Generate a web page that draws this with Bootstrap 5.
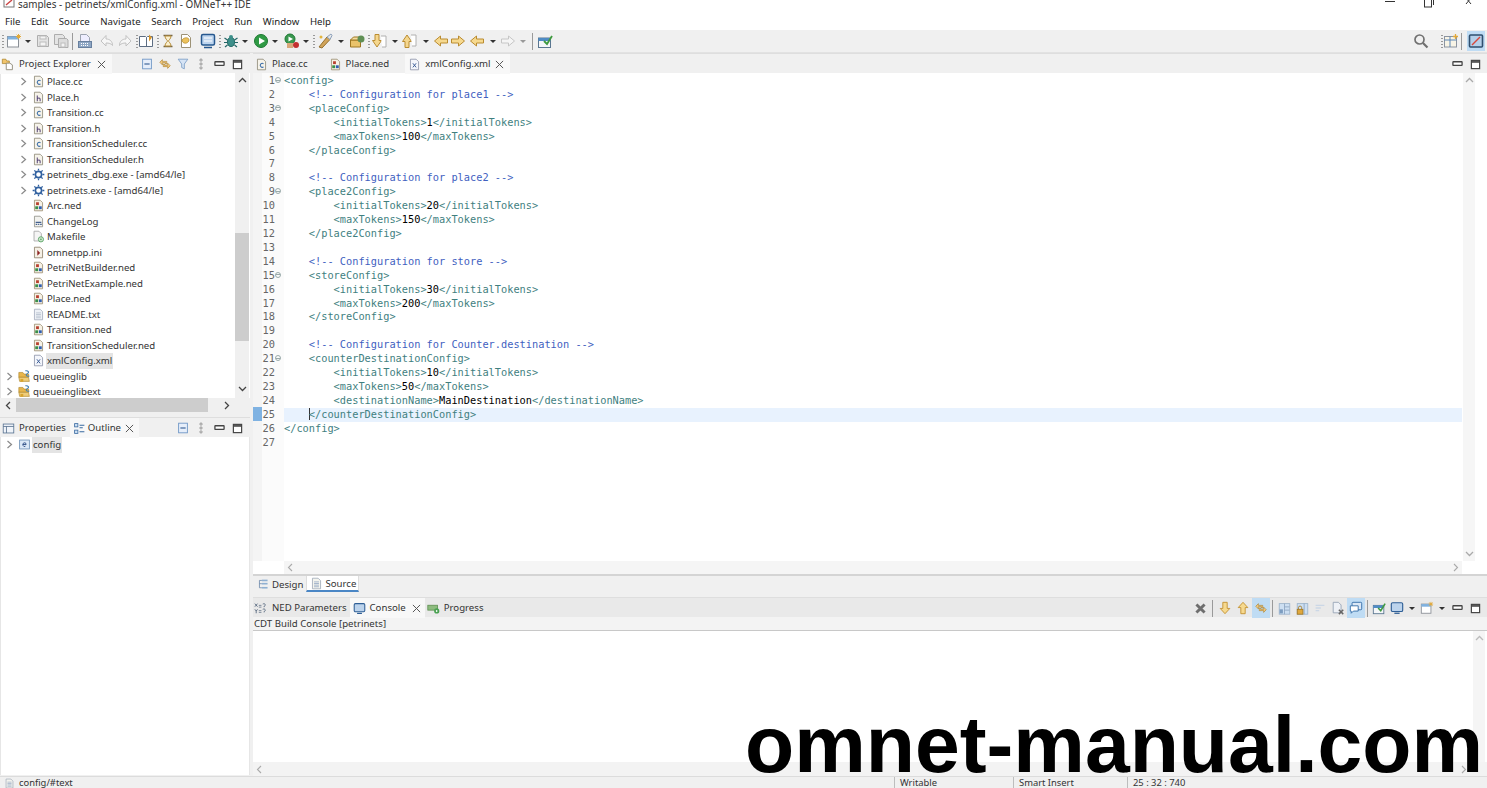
<!DOCTYPE html>
<html lang="en">
<head>
<meta charset="utf-8">
<title>samples - petrinets/xmlConfig.xml - OMNeT++ IDE</title>
<link rel="stylesheet" href="https://cdn.jsdelivr.net/npm/bootstrap@5.3.0/dist/css/bootstrap.min.css">
<style>
html,body{height:788px;overflow:hidden;background:#f0f0f0}
body{font-family:"Noto Sans","Liberation Sans",sans-serif;font-size:9.65px;color:#2b2b2b;width:1487px;position:relative}
svg{display:block;flex:none}
.ide-title{height:11px;line-height:9px;font-size:9.9px;background:#fff;padding-left:3px;color:#333}
.ide-title .ttxt{margin-left:3px}
.ide-winbtn{width:39px;display:flex;justify-content:center}
.ide-menu{height:19px;background:#fff;padding-left:5px;padding-top:1px;gap:10.6px;font-size:9.65px;color:#222;line-height:19px}
.ide-tools{height:23px;background:#f0f0f0;border-bottom:1px solid #e2e2e2;padding-left:5px}
.ti{width:18px;height:20px;display:flex;align-items:center;justify-content:center}
.tc{width:10px;height:20px;display:flex;align-items:center;justify-content:center}
.tc::after{content:"";border:3px solid transparent;border-top:3px solid #333;border-bottom:0}
.tc.off::after{border-top-color:#999}
.tsep{width:1px;height:17px;background:#9a9a9a}
.grip{width:2px;height:14px;background-image:radial-gradient(circle,#999 .8px,transparent 1px);background-size:2px 3px;margin-left:2px;margin-right:-4px}
.grip.first{margin-left:-3px;margin-right:1px}
.m1{margin-left:1px}.m2{margin-left:2px}.m3{margin-left:3px}.m4{margin-left:4px}.m5{margin-left:5px}.mn1{margin-left:-1px}
.gap-search{margin-right:9px}
.ide-body{height:723px}
.left-col{width:250px;flex:none}
.right-col{width:1234px;margin-left:3px;flex:none}
.pane-head{height:20px;background:#f0f0f0;border-top:1px solid #dedede}
.tabx{height:20px;padding:0 6px 0 3px;line-height:20px;white-space:nowrap;color:#333}
.tabx.on{background:#f8f8f8}
.tabx .xx{width:9px;height:9px;margin-left:6px}
.tab-e{padding-left:1px}
.pane-tools{height:20px;padding-right:4px}
.pane-tools.wide{padding-right:3px}
.ptree{height:325px;background:#fff;border-left:1px solid #e6e6e6;overflow:hidden}
.treewrap{width:234px;padding-top:1px;flex:none;height:325px;overflow:hidden}
.trow{height:15.5px;line-height:15.5px;white-space:nowrap;color:#333;display:flex;align-items:center}
.trow.l1{padding-left:19px}
.trow.l0{padding-left:5px}
.trow .chev{width:7px;height:9px;margin-right:5px}
.trow .nochev{width:12px;flex:none}
.trow .ic{margin-right:1px}
.trow .lb{padding:0 1px}
.trow .sel{background:#e4e4e4}
.vbar{width:14px;background:#f0f0f0;flex:none;display:flex;flex-direction:column;justify-content:space-between;align-items:center}
.vbar .up,.vbar .dn{height:14px;display:flex;align-items:center}
.ptree .vbar{padding-bottom:2px}
.thumb-v{background:#cdcdcd;width:14px;height:108px;flex:none;margin-top:auto;margin-bottom:41px}
.hbar{height:14px;background:#f0f0f0;display:flex;align-items:center;justify-content:space-between;padding:0 20px 0 5px;position:relative}
.hthumb{background:#cdcdcd;height:14px;width:192px;position:absolute;left:16px;top:0}
.left-bottom .pane-head{margin-top:5px}
.outl{height:338px;background:#fff;border-left:1px solid #e6e6e6;border-right:1px solid #e6e6e6}
.tab-p{padding-left:2px;padding-right:4px}
.tab-o{padding-right:5px}
.tab-o svg:first-child{margin-right:2px!important}
.tab-o .xx{margin-left:4px}
.tab-a{padding-left:2px;padding-right:18px}
.tab-b{padding-left:3px;padding-right:16px}
.tab-c .xx{margin-left:4px}
.ed-wrap{height:521px;background:#fff}
.ed-rule{width:9px;background:#f4f4f4;flex:none;position:relative}
.ed-mark{position:absolute;left:0;top:334px;width:9px;height:14px;background:#7fb2e2}
.ed-nums{width:22px;flex:none;background:#fbfbfb;font-family:"DejaVu Sans Mono","Liberation Mono",monospace;font-size:10.3px;line-height:13.92px;color:#666;text-align:right;padding-top:1px}
.ed-nums div{height:13.92px;padding-right:9px;position:relative}
.ed-nums .fold::after{content:"";position:absolute;right:3px;top:3px;width:6px;height:6px;border:1px solid #9aa;border-radius:50%;background:linear-gradient(#9aa,#9aa) center/4px 1px no-repeat}
.ed-code{flex:1;font-family:"DejaVu Sans Mono","Liberation Mono",monospace;font-size:10.3px;line-height:13.92px;color:#3f7f7f;min-width:0;padding-top:1px}
.ed-code div{height:13.92px;white-space:pre}
.ed-code .cur{background:#e8f2fe}
.cm{color:#3f5fbf}
.tx{color:#000}
.crt{box-shadow:inset 1px 0 #333}
.ed-vbar{width:25px;flex:none;background:#fff;display:flex;justify-content:flex-start}
.ed-vbar .vbar{width:12px;background:#f6f6f6;margin-left:1px}
.ed-hbar{height:13px;background:#f5f5f5;margin-left:31px;margin-right:25px;display:flex;align-items:center;justify-content:space-between;padding:0 3px}
.ed-area{height:488px}
.ed-tabsb{height:20px;background:#f0f0f0;border-top:2px solid #d4d4d4;padding-left:1px}
.subtab{height:16px;line-height:15px;padding:0 2px 0 3px;gap:2px;color:#333}
.subtab.on{background:#fff;border-bottom:2px solid #4a86c5;border-left:1px solid #ddd;border-right:1px solid #ddd;margin-left:1px}
.bot-head{height:20px;margin-top:3px;background:#e9e9e9;border-top:1px solid #dedede}
.tab-n{padding-left:1px;padding-right:3px}
.tab-k{padding-left:3px;padding-right:4px}
.tab-g{padding-left:2px}
.bot-sub{height:14px;line-height:13px;background:#f3f3f3;border-bottom:1px solid #c8c8c8;padding-left:1px;color:#333}
.bot-text{height:131px;background:#fff}
.bot-text .vbar{width:12px;background:#f5f5f5;margin-right:2px}
.bot-hbar{height:14px;background:#f3f3f3;display:flex;align-items:center;justify-content:space-between;padding:0 20px 0 3px}
.bot-tools .tsep{margin:0 3px}
.bot-tools .tsep.nar{margin:0 2px}
.bot-tools .tc{width:12px}
.act{background:#bfdcf4}
.ide-status{height:12px;background:#f0f0f0;border-top:1px solid #dcdcdc;font-size:9.4px;line-height:11px;color:#333;overflow:hidden}
.st-cell{border-left:1px solid #bdbdbd;padding-left:5px}
.st-a{width:119px}.st-b{width:114px}.st-c{width:112px}.st-d{width:248px}
.wm{position:absolute;left:745px;top:712px;font-family:"Liberation Sans",Arial,sans-serif;font-weight:700;font-size:80.5px;line-height:64px;color:#000;white-space:nowrap}
.mrg-sp{width:2px}
</style>
</head>
<body>
<svg width="0" height="0" class="position-absolute">
<defs>
<symbol id="xclose" viewBox="0 0 10 10"><path d="M1 1l8 8M9 1l-8 8" stroke="#555" stroke-width="1.100" fill="none"/></symbol>
<symbol id="chev" viewBox="0 0 7 9"><path d="M1.500 1l4 3.500-4 3.500" stroke="#8a8a8a" stroke-width="1.200" fill="none"/></symbol>
<symbol id="mini" viewBox="0 0 12 12"><rect x="1" y="3" width="10" height="4" rx=".5" fill="#fff" stroke="#444" stroke-width="1.400"/></symbol>
<symbol id="maxi" viewBox="0 0 12 12"><rect x="1.500" y="1.500" width="9" height="9" fill="#fff" stroke="#444" stroke-width="1.300"/><path d="M1.500 3.200h9" stroke="#444" stroke-width="1.800"/></symbol>
<symbol id="collapse" viewBox="0 0 16 16"><rect x="3" y="2.500" width="10" height="11" fill="#e6eefa" stroke="#6b93c4"/><path d="M5 8h6" stroke="#43699c" stroke-width="1.400"/></symbol>
<symbol id="link" viewBox="0 0 16 16"><path d="M2 6l3-3v2h5v3H8.500V6.500H5V9z" fill="#f3c97b" stroke="#a97f2b" stroke-width=".7"/><path d="M14 10l-3 3v-2H6V8h1.500v1.500H11V7z" fill="#f3c97b" stroke="#a97f2b" stroke-width=".7"/></symbol>
<symbol id="funnel" viewBox="0 0 16 16"><path d="M2.500 2.500h11L9.500 8v5.500l-3-1.500V8z" fill="#d6e4f5" stroke="#7d9fc7"/></symbol>
<symbol id="dots" viewBox="0 0 6 16"><circle cx="3" cy="3.500" r="1.300" fill="none" stroke="#777" stroke-width=".8"/><circle cx="3" cy="8" r="1.300" fill="none" stroke="#777" stroke-width=".8"/><circle cx="3" cy="12.500" r="1.300" fill="none" stroke="#777" stroke-width=".8"/></symbol>
<symbol id="fc" viewBox="0 0 16 16"><path d="M3 1.500h7l3 3v10H3z" fill="#f6f3ea" stroke="#8c8775"/><path d="M10.500 7.200a2.400 2.400 0 1 0 0 3.600" fill="none" stroke="#3c6ea8" stroke-width="1.300"/></symbol>
<symbol id="fh" viewBox="0 0 16 16"><path d="M3 1.500h7l3 3v10H3z" fill="#f6f3ea" stroke="#8c8775"/><path d="M6.500 5.500v7M6.500 9.500c1-1.300 3.500-1.300 3.500.5v2.500" fill="none" stroke="#5a4a7a" stroke-width="1.300"/></symbol>
<symbol id="fned" viewBox="0 0 16 16"><path d="M3 1.500h7l3 3v10H3z" fill="#f6f1e4" stroke="#9a8d70"/><rect x="5" y="4" width="3.500" height="3.500" fill="#b8402f"/><rect x="4" y="9" width="3.500" height="3.500" fill="#3a8f48"/><rect x="8.500" y="9" width="3.500" height="3.500" fill="#2f5eb0"/></symbol>
<symbol id="fxml" viewBox="0 0 16 16"><path d="M3 1.500h7l3 3v10H3z" fill="#f4f6fb" stroke="#8b93a8"/><path d="M6 6.500l4 5M10 6.500l-4 5" stroke="#3a5c96" stroke-width="1.200" fill="none"/></symbol>
<symbol id="ftxt" viewBox="0 0 16 16"><path d="M3 1.500h7l3 3v10H3z" fill="#eef1f6" stroke="#a4adbc"/><path d="M5 6h6M5 8h6M5 10h6M5 12h6" stroke="#b5bfcd"/></symbol>
<symbol id="flog" viewBox="0 0 16 16"><path d="M3 1.500h7l3 3v10H3z" fill="#f2f2ee" stroke="#8f8f86"/><path d="M4.500 9h7M4.500 11.500h2M7.500 11.500h1.500M10 11.500h2" stroke="#44608f" stroke-width="1.400"/></symbol>
<symbol id="fmk" viewBox="0 0 16 16"><path d="M2.500 1.500h6l3 3v9h-9z" fill="#f5f5f5" stroke="#a2a2a2"/><circle cx="11" cy="11.500" r="3.200" fill="#cfe8cf" stroke="#4d9c5a"/><circle cx="11" cy="11.500" r="1" fill="#4d9c5a"/></symbol>
<symbol id="fini" viewBox="0 0 16 16"><path d="M3 1.500h7l3 3v10H3z" fill="#f5f0e6" stroke="#8b7f68"/><path d="M6.500 5l3.500 3.500L6.500 12z" fill="#8d2323"/></symbol>
<symbol id="exe" viewBox="0 0 16 16"><circle cx="8" cy="8" r="3.800" fill="#fff" stroke="#2f5f9e" stroke-width="2"/><path d="M8 .8v2.400M8 12.800v2.400M.8 8h2.400M12.800 8h2.400M2.900 2.900l1.700 1.700M11.400 11.400l1.700 1.700M13.100 2.900l-1.700 1.700M4.600 11.400l-1.700 1.700" stroke="#2f5f9e" stroke-width="1.600"/></symbol>
<symbol id="proj" viewBox="0 0 16 16"><path d="M1 3h5l1.500 2H13v4H1z" fill="#e8b64c" stroke="#a67e21" stroke-width=".7"/><path d="M1 9h12l1 5H2z" fill="#efcd7a" stroke="#a67e21" stroke-width=".7"/><path d="M9 1c4-.5 5 2 2.500 3.500S10 8 14 7.500" fill="none" stroke="#3f7fb6" stroke-width="1.300"/><rect x="3" y="11" width="3.500" height="3.500" fill="#d8a52f"/></symbol>
<symbol id="pexp" viewBox="0 0 16 16"><path d="M1.500 2.500h4l1 2h3v3h-8z" fill="#f1c46b" stroke="#a67e21" stroke-width=".8"/><path d="M6 7h4l3 2v5.500H6z" fill="#fff" stroke="#8c8775"/></symbol>
<symbol id="props" viewBox="0 0 16 16"><rect x="1.500" y="2.500" width="13" height="11" fill="#f0f4fa" stroke="#56708f"/><path d="M1.500 5.500h13M5.500 5.500v8" stroke="#56708f"/></symbol>
<symbol id="outl" viewBox="0 0 16 16"><rect x="2" y="2" width="4" height="4" fill="#cfe2f5" stroke="#37689f"/><rect x="2" y="10" width="4" height="4" fill="#cfe2f5" stroke="#37689f"/><path d="M8 4h6M8 7h4M8 12h6" stroke="#37689f" stroke-width="1.300"/></symbol>
<symbol id="eel" viewBox="0 0 16 16"><rect x="2" y="2.500" width="12" height="11" fill="#dce9f7" stroke="#6d8fb6"/><path d="M6 8h4M10 8a2 2.300 0 1 0-.8 2" fill="none" stroke="#2f4f86" stroke-width="1.100"/></symbol>
<symbol id="design" viewBox="0 0 16 16"><path d="M3 3h3M3 3v9M3 7h3M3 12h3" stroke="#6c89ab" fill="none"/><rect x="6" y="2" width="7" height="2" fill="#8fb0d2"/><rect x="6" y="6" width="7" height="2" fill="#8fb0d2"/><rect x="6" y="11" width="7" height="2" fill="#8fb0d2"/></symbol>
<symbol id="srcdoc" viewBox="0 0 16 16"><path d="M3 1.500h7l3 3v10H3z" fill="#f4f4ee" stroke="#9ea9b8"/><path d="M5 6h6M5 8h6M5 10h6M5 12h6" stroke="#94a8c4"/></symbol>
<symbol id="nedp" viewBox="0 0 16 16"><path d="M1 3l3 3.500M4 3L1 6.500M10 3.500c3-1.500 4 2 1.500 2.500v1M1 9.500l1.500 2 1.500-2M2.500 11.500v2.500M10 9.500c3-1.500 4 2 1.500 2.500v1" stroke="#55667d" fill="none"/><path d="M5.500 5h3M5.500 7h3M5.500 11h3M5.500 13h3" stroke="#55667d" stroke-width=".8"/></symbol>
<symbol id="cons" viewBox="0 0 16 16"><rect x="1.500" y="2" width="13" height="10" rx="1.500" fill="#bcd3ec" stroke="#2f5f96" stroke-width="1.300"/><path d="M5 14h6" stroke="#2f5f96" stroke-width="1.500"/></symbol>
<symbol id="prog" viewBox="0 0 16 16"><rect x="1" y="4" width="12" height="6" fill="#8dbb7e" stroke="#5e8f51"/><circle cx="12" cy="11" r="3.200" fill="#47a04f"/><path d="M11 9.500l2.500 1.500-2.500 1.500z" fill="#fff"/></symbol>
<symbol id="newf" viewBox="0 0 16 16"><rect x="1.500" y="3.500" width="11" height="10.500" fill="#fff" stroke="#8a8f96"/><rect x="1.500" y="3.500" width="11" height="3" fill="#7fb1df"/><path d="M12.500 1v5M10 3.500h5M10.700 1.700l3.600 3.600M14.300 1.700l-3.600 3.600" stroke="#e2a93a"/></symbol>
<symbol id="saveo" viewBox="0 0 16 16"><path d="M2.500 2.500h9l2 2v9h-11z" fill="#e4e4e4" stroke="#adadad"/><rect x="5" y="3" width="6" height="3" fill="#f4f4f4" stroke="#bdbdbd"/><rect x="5" y="9" width="6" height="4" fill="#f4f4f4" stroke="#bdbdbd"/></symbol>
<symbol id="savea" viewBox="0 0 16 16"><path d="M1.500 1.500h8l2 2v8h-10z" fill="#e4e4e4" stroke="#adadad"/><path d="M5.500 5.500h8l1.500 1.500v7.500h-9.500z" fill="#dcdcdc" stroke="#adadad"/><rect x="8" y="10" width="4" height="4" fill="#f4f4f4" stroke="#bdbdbd"/></symbol>
<symbol id="print" viewBox="0 0 16 16"><path d="M3.500 1.500h6l3 3v4h-9z" fill="#eef" stroke="#9ca3b0"/><rect x="1.500" y="8.500" width="13" height="6" fill="#8ea6c4" stroke="#68809f"/><path d="M4 10.500h8M4 12.500h8" stroke="#fff" stroke-dasharray="1 1"/></symbol>
<symbol id="undo" viewBox="0 0 16 16"><path d="M7 2.500L2 8l5 5V10c3 0 5 .5 6.500 2.500 0-4-2.500-6.500-6.500-6.500z" fill="#f7f7f7" stroke="#c2c2c2"/></symbol>
<symbol id="redo" viewBox="0 0 16 16"><path d="M9 2.500L14 8l-5 5V10c-3 0-5 .5-6.500 2.500 0-4 2.500-6.500 6.500-6.500z" fill="#f7f7f7" stroke="#c2c2c2"/></symbol>
<symbol id="book" viewBox="0 0 16 16"><path d="M1.500 3.500h6l1 1 1-1h5v10h-13z" fill="#fff" stroke="#5d6d82"/><path d="M8.500 4.500v9" stroke="#5d6d82"/><path d="M11 1.500l3 3-3 4z" fill="#d7962a"/></symbol>
<symbol id="hour" viewBox="0 0 16 16"><path d="M3.500 2.500h9M3.500 13.500h9" stroke="#7a6a48" stroke-width="1.400"/><path d="M5 3c0 3 2.500 4 2.500 5S5 10 5 13h6c0-3-2.500-4-2.500-5S11 6 11 3z" fill="#faf0d0" stroke="#b88f3c"/></symbol>
<symbol id="note" viewBox="0 0 16 16"><path d="M3.500 1.500h6l3 3v10h-9z" fill="#fff" stroke="#9d9276"/><path d="M4 7c2-3 7-3 7 0s-5 5-7 1z" fill="#edc35e" stroke="#b58a2a" stroke-width=".7"/></symbol>
<symbol id="mon" viewBox="0 0 16 16"><rect x="1.500" y="1.500" width="13" height="10.500" rx="1.500" fill="#bed5ee" stroke="#26588f" stroke-width="1.500"/><path d="M4 5h8M4 8h8" stroke="#fff"/><path d="M4 14.500h8" stroke="#26588f" stroke-width="1.500"/></symbol>
<symbol id="bug" viewBox="0 0 16 16"><ellipse cx="8" cy="9" rx="3.500" ry="4.500" fill="#3d8f8a" stroke="#236b66"/><circle cx="8" cy="4" r="2" fill="#3d8f8a"/><path d="M1.500 5l3 2M14.500 5l-3 2M1 9.500h3M15 9.500h-3M2 14l2.500-2M14 14l-2.500-2" stroke="#266" stroke-width="1.200"/></symbol>
<symbol id="run" viewBox="0 0 16 16"><circle cx="8" cy="8" r="6.500" fill="#2f9a44" stroke="#1e7a33"/><path d="M6 4.500L12 8l-6 3.500z" fill="#fff"/></symbol>
<symbol id="extr" viewBox="0 0 16 16"><circle cx="6" cy="6" r="5" fill="#3a9850" stroke="#1e7a33"/><path d="M4.500 3.500L9 6l-4.500 2.500z" fill="#fff"/><rect x="3" y="10" width="6" height="5" fill="#d8a87a"/><circle cx="12" cy="12" r="3" fill="#c33030"/></symbol>
<symbol id="wand" viewBox="0 0 16 16"><path d="M2 14L10 4l3 2.500L5 15z" fill="#d1a45a" stroke="#96712f"/><path d="M10 4l4-3 1 1.500-2 4z" fill="#e8e8e8" stroke="#8ba0bb"/><circle cx="4" cy="4" r="1.500" fill="#e3b43c"/></symbol>
<symbol id="pkg" viewBox="0 0 16 16"><path d="M1.500 7h10v7h-10z" fill="#eac36a" stroke="#9d7722"/><path d="M1.500 7l3-3h8l-1 3z" fill="#f4dda0" stroke="#9d7722"/><circle cx="12" cy="6" r="3.500" fill="#5f8f54"/></symbol>
<symbol id="nxa" viewBox="0 0 16 16"><path d="M4 1.500h4v6h2.500L6 14 1.500 7.500H4z" fill="#f5d78e" stroke="#ba8c31"/><path d="M10 3h5v11h-4" fill="#fff" stroke="#b0b0b0"/></symbol>
<symbol id="pra" viewBox="0 0 16 16"><path d="M4 14.500h4v-6h2.500L6 2 1.500 8.500H4z" fill="#f5d78e" stroke="#ba8c31"/><path d="M10 2h5v11h-4" fill="#fff" stroke="#b0b0b0"/></symbol>
<symbol id="dn" viewBox="0 0 16 16"><path d="M5.500 1.500h5v7h3L8 14.500 2.500 8.500h3z" fill="#f6d98f" stroke="#c18f2e"/></symbol>
<symbol id="upa" viewBox="0 0 16 16"><path d="M5.500 14.500h5v-7h3L8 1.500 2.500 7.500h3z" fill="#f6d98f" stroke="#c18f2e"/></symbol>
<symbol id="lt" viewBox="0 0 16 16"><path d="M7.500 3L1.500 8l6 5v-3h7V6h-7z" fill="#f6d98f" stroke="#ba8c31"/></symbol>
<symbol id="rt" viewBox="0 0 16 16"><path d="M8.500 3l6 5-6 5v-3h-7V6h7z" fill="#f6d98f" stroke="#ba8c31"/></symbol>
<symbol id="rtoff" viewBox="0 0 16 16"><path d="M8.500 3l6 5-6 5v-3h-7V6h7z" fill="#f5f5f5" stroke="#c6c6c6"/></symbol>
<symbol id="search" viewBox="0 0 16 16"><circle cx="6.500" cy="6.500" r="4.500" fill="none" stroke="#707070" stroke-width="1.700"/><path d="M10 10l4.500 4.500" stroke="#707070" stroke-width="2.200"/></symbol>
<symbol id="persp" viewBox="0 0 16 16"><rect x="1.500" y="3.500" width="12" height="10.500" fill="#f8f4e6" stroke="#8c94a0"/><path d="M1.500 7h12M7 3.500v10.500" stroke="#5a86b8"/><path d="M12.500 1v5M10 3.500h5" stroke="#e2a93a" stroke-width="1.300"/></symbol>
<symbol id="actp" viewBox="0 0 16 16"><rect x="1.500" y="2" width="13" height="12" rx="1" fill="#b5d0ea" stroke="#2f4f6f" stroke-width="1.600"/><path d="M4 12L12 4" stroke="#d9483c" stroke-width="1.500"/></symbol>
<symbol id="xx" viewBox="0 0 16 16"><path d="M3 3l10 10M13 3L3 13" stroke="#6e6e6e" stroke-width="3.600"/></symbol>
<symbol id="stack" viewBox="0 0 16 16"><rect x="1.500" y="2" width="13" height="13" fill="#cddff2" stroke="#9ab1c9"/><path d="M8 2v13M8 6h6M8 10h6" stroke="#8aa3bf"/><rect x="2" y="9" width="4" height="5" fill="#7d9dc0"/></symbol>
<symbol id="lock" viewBox="0 0 16 16"><rect x="1.500" y="2" width="13" height="13" fill="#cddff2" stroke="#9ab1c9"/><path d="M10 2v13" stroke="#8aa3bf"/><rect x="1.500" y="9" width="7" height="6" fill="#e0a83c" stroke="#a3761e"/><path d="M3 9V7a2 2 0 0 1 4 0v2" fill="none" stroke="#a3761e"/></symbol>
<symbol id="lines" viewBox="0 0 16 16"><path d="M3 5h10M3 8h6M3 11h4" stroke="#cbd7e6" stroke-width="1.500"/></symbol>
<symbol id="rmdoc" viewBox="0 0 16 16"><path d="M2.500 1.500h6l3 3v9h-9z" fill="#eef1f6" stroke="#95a2b5"/><path d="M9 10l5 5M14 10l-5 5" stroke="#666" stroke-width="1.700"/></symbol>
<symbol id="pin" viewBox="0 0 16 16"><rect x="3.500" y="1.500" width="11" height="8.500" rx="1" fill="#dbe8f6" stroke="#2f69a6"/><path d="M1.500 5.500h9v6H5l-2.500 2.500v-2.500h-1z" fill="#fff" stroke="#2f69a6"/></symbol>
<symbol id="dispc" viewBox="0 0 16 16"><rect x="1.500" y="5" width="12" height="9.500" fill="#f4f6f9" stroke="#5a7690"/><rect x="1.500" y="5" width="12" height="3" fill="#4f8bc4"/><path d="M7 8l3 3 5-8" fill="none" stroke="#3f9a3f" stroke-width="1.800"/></symbol>
</defs>
</svg>

<div class="ide-title d-flex justify-content-between">
  <div class="d-flex align-items-start">
    <svg width="12" height="8" viewBox="0 0 12 8"><rect x="1" y="-4" width="10" height="11" fill="#fff" stroke="#777"/><path d="M3 5L9 0" stroke="#c44" stroke-width="1.400"/></svg>
    <span class="ttxt">samples - petrinets/xmlConfig.xml - OMNeT++ IDE</span>
  </div>
  <div class="d-flex">
    <div class="ide-winbtn"><svg width="10" height="4"><path d="M0 1.500h10" stroke="#333"/></svg></div>
    <div class="ide-winbtn"><svg width="10" height="8"><rect x=".5" y="-4" width="7" height="11" fill="#fff" stroke="#333"/><path d="M9.500 0v5" stroke="#333"/></svg></div>
    <div class="ide-winbtn"><svg width="10" height="6"><path d="M3 -2l5 6M8 -2l-5 6" stroke="#333"/></svg></div>
  </div>
</div>
<div class="ide-menu d-flex"><span>File</span><span>Edit</span><span>Source</span><span>Navigate</span><span>Search</span><span>Project</span><span>Run</span><span>Window</span><span>Help</span></div>
<div class="ide-tools d-flex align-items-center">
  <div class="grip first"></div>
  <div class="ti"><svg width="16" height="16"><use href="#newf"/></svg></div><div class="tc"></div>
  <div class="ti m1"><svg width="16" height="16"><use href="#saveo"/></svg></div><div class="ti"><svg width="16" height="16"><use href="#savea"/></svg></div>
  <div class="tsep m2"></div>
  <div class="ti m3"><svg width="16" height="16"><use href="#print"/></svg></div>
  <div class="ti m4"><svg width="16" height="16"><use href="#undo"/></svg></div><div class="ti"><svg width="16" height="16"><use href="#redo"/></svg></div>
  <div class="grip"></div>
  <div class="ti m3"><svg width="16" height="16"><use href="#book"/></svg></div>
  <div class="grip"></div>
  <div class="ti m4"><svg width="16" height="16"><use href="#hour"/></svg></div><div class="ti"><svg width="16" height="16"><use href="#note"/></svg></div>
  <div class="ti m4"><svg width="16" height="16"><use href="#mon"/></svg></div>
  <div class="grip"></div>
  <div class="ti m5"><svg width="16" height="16"><use href="#bug"/></svg></div><div class="tc"></div>
  <div class="ti m2"><svg width="16" height="16"><use href="#run"/></svg></div><div class="tc"></div>
  <div class="ti m3"><svg width="16" height="16"><use href="#extr"/></svg></div><div class="tc"></div>
  <div class="grip"></div>
  <div class="ti m5"><svg width="16" height="16"><use href="#wand"/></svg></div><div class="tc m2"></div>
  <div class="ti m2"><svg width="16" height="16"><use href="#pkg"/></svg></div>
  <div class="grip"></div>
  <div class="ti m4"><svg width="16" height="16"><use href="#nxa"/></svg></div><div class="tc m2"></div>
  <div class="ti"><svg width="16" height="16"><use href="#pra"/></svg></div><div class="tc m3"></div>
  <div class="ti m1"><svg width="16" height="16"><use href="#lt"/></svg></div><div class="ti mn1"><svg width="16" height="16"><use href="#rt"/></svg></div>
  <div class="ti m1"><svg width="16" height="16"><use href="#lt"/></svg></div><div class="tc m2"></div>
  <div class="ti m1"><svg width="16" height="16"><use href="#rtoff"/></svg></div><div class="tc off m1"></div>
  <div class="tsep m4"></div>
  <div class="ti m3"><svg width="16" height="16"><use href="#dispc"/></svg></div>
  <div class="ms-auto d-flex align-items-center">
    <div class="ti gap-search"><svg width="16" height="16"><use href="#search"/></svg></div>
    <div class="grip"></div>
    <div class="ti m3"><svg width="16" height="16"><use href="#persp"/></svg></div>
    <div class="tsep m1"></div>
    <div class="ti act m5"><svg width="16" height="16"><use href="#actp"/></svg></div>
    <div class="mrg-sp"></div>
  </div>
</div>

<div class="ide-body d-flex">
  <div class="left-col">
    <div class="left-top">
      <div class="pane-head d-flex justify-content-between">
        <div class="d-flex">
          <div class="tabx tab-e on d-flex align-items-center"><svg class="me-1" width="14" height="14"><use href="#pexp"/></svg>Project Explorer<svg class="xx" width="9" height="9"><use href="#xclose"/></svg></div>
        </div>
        <div class="pane-tools d-flex align-items-center">
          <div class="ti"><svg width="14" height="14"><use href="#collapse"/></svg></div>
          <div class="ti"><svg width="14" height="14"><use href="#link"/></svg></div>
          <div class="ti"><svg width="14" height="14"><use href="#funnel"/></svg></div>
          <div class="ti"><svg width="6" height="14"><use href="#dots"/></svg></div>
          <div class="ti"><svg width="11" height="11"><use href="#mini"/></svg></div>
          <div class="ti"><svg width="11" height="11"><use href="#maxi"/></svg></div>
        </div>
      </div>
      <div class="ptree d-flex">
        <div class="treewrap">
          <div class="trow l1"><svg class="chev"><use href="#chev"/></svg><svg class="ic" width="13" height="13"><use href="#fc"/></svg><span class="lb">Place.cc</span></div>
          <div class="trow l1"><svg class="chev"><use href="#chev"/></svg><svg class="ic" width="13" height="13"><use href="#fh"/></svg><span class="lb">Place.h</span></div>
          <div class="trow l1"><svg class="chev"><use href="#chev"/></svg><svg class="ic" width="13" height="13"><use href="#fc"/></svg><span class="lb">Transition.cc</span></div>
          <div class="trow l1"><svg class="chev"><use href="#chev"/></svg><svg class="ic" width="13" height="13"><use href="#fh"/></svg><span class="lb">Transition.h</span></div>
          <div class="trow l1"><svg class="chev"><use href="#chev"/></svg><svg class="ic" width="13" height="13"><use href="#fc"/></svg><span class="lb">TransitionScheduler.cc</span></div>
          <div class="trow l1"><svg class="chev"><use href="#chev"/></svg><svg class="ic" width="13" height="13"><use href="#fh"/></svg><span class="lb">TransitionScheduler.h</span></div>
          <div class="trow l1"><svg class="chev"><use href="#chev"/></svg><svg class="ic" width="13" height="13"><use href="#exe"/></svg><span class="lb">petrinets_dbg.exe - [amd64/le]</span></div>
          <div class="trow l1"><svg class="chev"><use href="#chev"/></svg><svg class="ic" width="13" height="13"><use href="#exe"/></svg><span class="lb">petrinets.exe - [amd64/le]</span></div>
          <div class="trow l1"><span class="nochev"></span><svg class="ic" width="13" height="13"><use href="#fned"/></svg><span class="lb">Arc.ned</span></div>
          <div class="trow l1"><span class="nochev"></span><svg class="ic" width="13" height="13"><use href="#flog"/></svg><span class="lb">ChangeLog</span></div>
          <div class="trow l1"><span class="nochev"></span><svg class="ic" width="13" height="13"><use href="#fmk"/></svg><span class="lb">Makefile</span></div>
          <div class="trow l1"><span class="nochev"></span><svg class="ic" width="13" height="13"><use href="#fini"/></svg><span class="lb">omnetpp.ini</span></div>
          <div class="trow l1"><span class="nochev"></span><svg class="ic" width="13" height="13"><use href="#fned"/></svg><span class="lb">PetriNetBuilder.ned</span></div>
          <div class="trow l1"><span class="nochev"></span><svg class="ic" width="13" height="13"><use href="#fned"/></svg><span class="lb">PetriNetExample.ned</span></div>
          <div class="trow l1"><span class="nochev"></span><svg class="ic" width="13" height="13"><use href="#fned"/></svg><span class="lb">Place.ned</span></div>
          <div class="trow l1"><span class="nochev"></span><svg class="ic" width="13" height="13"><use href="#ftxt"/></svg><span class="lb">README.txt</span></div>
          <div class="trow l1"><span class="nochev"></span><svg class="ic" width="13" height="13"><use href="#fned"/></svg><span class="lb">Transition.ned</span></div>
          <div class="trow l1"><span class="nochev"></span><svg class="ic" width="13" height="13"><use href="#fned"/></svg><span class="lb">TransitionScheduler.ned</span></div>
          <div class="trow l1"><span class="nochev"></span><svg class="ic" width="13" height="13"><use href="#fxml"/></svg><span class="lb sel">xmlConfig.xml</span></div>
          <div class="trow l0"><svg class="chev"><use href="#chev"/></svg><svg class="ic" width="13" height="13"><use href="#proj"/></svg><span class="lb">queueinglib</span></div>
          <div class="trow l0"><svg class="chev"><use href="#chev"/></svg><svg class="ic" width="13" height="13"><use href="#proj"/></svg><span class="lb">queueinglibext</span></div>
        </div>
        <div class="vbar">
          <div class="up"><svg width="9" height="6"><path d="M1 5l3.500-3.500L8 5" fill="none" stroke="#444" stroke-width="1.300"/></svg></div>
          <div class="thumb-v"></div>
          <div class="dn"><svg width="9" height="6"><path d="M1 1l3.500 3.500L8 1" fill="none" stroke="#444" stroke-width="1.300"/></svg></div>
        </div>
      </div>
      <div class="hbar"><svg width="6" height="9"><path d="M5 1L1.500 4.500 5 8" fill="none" stroke="#444" stroke-width="1.300"/></svg><div class="hthumb"></div><svg width="6" height="9"><path d="M1 1l3.500 3.500L1 8" fill="none" stroke="#444" stroke-width="1.300"/></svg></div>
    </div>
    <div class="left-bottom">
      <div class="pane-head d-flex justify-content-between">
        <div class="d-flex">
          <div class="tabx tab-p d-flex align-items-center"><svg class="me-1" width="13" height="13"><use href="#props"/></svg>Properties</div>
          <div class="tabx tab-o on d-flex align-items-center"><svg class="me-1" width="13" height="13"><use href="#outl"/></svg>Outline<svg class="xx" width="9" height="9"><use href="#xclose"/></svg></div>
        </div>
        <div class="pane-tools d-flex align-items-center">
          <div class="ti"><svg width="14" height="14"><use href="#collapse"/></svg></div>
          <div class="ti"><svg width="6" height="14"><use href="#dots"/></svg></div>
          <div class="ti"><svg width="11" height="11"><use href="#mini"/></svg></div>
          <div class="ti"><svg width="11" height="11"><use href="#maxi"/></svg></div>
        </div>
      </div>
      <div class="outl"><div class="trow l0"><svg class="chev"><use href="#chev"/></svg><svg class="ic" width="13" height="13"><use href="#eel"/></svg><span class="lb sel">config</span></div></div>
    </div>
  </div>

  <div class="right-col">
    <div class="pane-head d-flex justify-content-between">
      <div class="d-flex">
        <div class="tabx tab-a d-flex align-items-center"><svg class="me-1" width="13" height="13"><use href="#fc"/></svg>Place.cc</div>
        <div class="tabx tab-b d-flex align-items-center"><svg class="me-1" width="13" height="13"><use href="#fned"/></svg>Place.ned</div>
        <div class="tabx tab-c on d-flex align-items-center"><svg class="me-1" width="13" height="13"><use href="#fxml"/></svg>xmlConfig.xml<svg class="xx" width="9" height="9"><use href="#xclose"/></svg></div>
      </div>
      <div class="pane-tools wide d-flex align-items-center">
        <div class="ti"><svg width="11" height="11"><use href="#mini"/></svg></div>
        <div class="ti"><svg width="11" height="11"><use href="#maxi"/></svg></div>
      </div>
    </div>
    <div class="ed-wrap">
      <div class="ed-area d-flex">
        <div class="ed-rule"><div class="ed-mark"></div></div>
        <div class="ed-nums">
          <div class="fold">1</div><div>2</div><div class="fold">3</div><div>4</div><div>5</div><div>6</div><div>7</div><div>8</div><div class="fold">9</div><div>10</div><div>11</div><div>12</div><div>13</div><div>14</div><div class="fold">15</div><div>16</div><div>17</div><div>18</div><div>19</div><div>20</div><div class="fold">21</div><div>22</div><div>23</div><div>24</div><div>25</div><div>26</div><div>27</div>
        </div>
        <div class="ed-code">
<div>&lt;config&gt;</div>
<div>    <span class="cm">&lt;!-- Configuration for place1 --&gt;</span></div>
<div>    &lt;placeConfig&gt;</div>
<div>        &lt;initialTokens&gt;<span class="tx">1</span>&lt;/initialTokens&gt;</div>
<div>        &lt;maxTokens&gt;<span class="tx">100</span>&lt;/maxTokens&gt;</div>
<div>    &lt;/placeConfig&gt;</div>
<div></div>
<div>    <span class="cm">&lt;!-- Configuration for place2 --&gt;</span></div>
<div>    &lt;place2Config&gt;</div>
<div>        &lt;initialTokens&gt;<span class="tx">20</span>&lt;/initialTokens&gt;</div>
<div>        &lt;maxTokens&gt;<span class="tx">150</span>&lt;/maxTokens&gt;</div>
<div>    &lt;/place2Config&gt;</div>
<div></div>
<div>    <span class="cm">&lt;!-- Configuration for store --&gt;</span></div>
<div>    &lt;storeConfig&gt;</div>
<div>        &lt;initialTokens&gt;<span class="tx">30</span>&lt;/initialTokens&gt;</div>
<div>        &lt;maxTokens&gt;<span class="tx">200</span>&lt;/maxTokens&gt;</div>
<div>    &lt;/storeConfig&gt;</div>
<div></div>
<div>    <span class="cm">&lt;!-- Configuration for Counter.destination --&gt;</span></div>
<div>    &lt;counterDestinationConfig&gt;</div>
<div>        &lt;initialTokens&gt;<span class="tx">10</span>&lt;/initialTokens&gt;</div>
<div>        &lt;maxTokens&gt;<span class="tx">50</span>&lt;/maxTokens&gt;</div>
<div>        &lt;destinationName&gt;<span class="tx">MainDestination</span>&lt;/destinationName&gt;</div>
<div class="cur">    <span class="crt">&lt;</span>/counterDestinationConfig&gt;</div>
<div>&lt;/config&gt;</div>
<div></div>
        </div>
        <div class="ed-vbar"><div class="vbar"><div class="up"><svg width="9" height="6"><path d="M1 5l3.500-3.500L8 5" fill="none" stroke="#aaa" stroke-width="1.300"/></svg></div><div class="dn"><svg width="9" height="6"><path d="M1 1l3.500 3.500L8 1" fill="none" stroke="#aaa" stroke-width="1.300"/></svg></div></div></div>
      </div>
      <div class="ed-hbar"><svg width="6" height="9"><path d="M5 1L1.500 4.500 5 8" fill="none" stroke="#aaa" stroke-width="1.100"/></svg><svg width="6" height="9"><path d="M1 1l3.500 3.500L1 8" fill="none" stroke="#aaa" stroke-width="1.100"/></svg></div>
      <div class="ed-tabsb d-flex">
        <div class="subtab d-flex align-items-center"><svg width="13" height="13"><use href="#design"/></svg>Design</div>
        <div class="subtab on d-flex align-items-center"><svg width="13" height="13"><use href="#srcdoc"/></svg>Source</div>
      </div>
    </div>
    <div class="bot-head d-flex justify-content-between">
      <div class="d-flex">
        <div class="tabx tab-n d-flex align-items-center"><svg class="me-1" width="14" height="14"><use href="#nedp"/></svg>NED Parameters</div>
        <div class="tabx tab-k on d-flex align-items-center"><svg class="me-1" width="13" height="13"><use href="#cons"/></svg>Console<svg class="xx" width="9" height="9"><use href="#xclose"/></svg></div>
        <div class="tabx tab-g d-flex align-items-center"><svg class="me-1" width="13" height="13"><use href="#prog"/></svg>Progress</div>
      </div>
      <div class="pane-tools wide bot-tools d-flex align-items-center">
        <div class="ti"><svg width="13" height="13"><use href="#xx"/></svg></div>
        <div class="tsep"></div>
        <div class="ti"><svg width="14" height="14"><use href="#dn"/></svg></div>
        <div class="ti"><svg width="14" height="14"><use href="#upa"/></svg></div>
        <div class="ti act"><svg width="14" height="14"><use href="#link"/></svg></div>
        <div class="tsep nar"></div>
        <div class="ti"><svg width="13" height="13"><use href="#stack"/></svg></div>
        <div class="ti"><svg width="13" height="13"><use href="#lock"/></svg></div>
        <div class="ti"><svg width="14" height="14"><use href="#lines"/></svg></div>
        <div class="ti"><svg width="14" height="14"><use href="#rmdoc"/></svg></div>
        <div class="ti act"><svg width="14" height="14"><use href="#pin"/></svg></div>
        <div class="tsep nar"></div>
        <div class="ti"><svg width="14" height="14"><use href="#dispc"/></svg></div>
        <div class="ti"><svg width="14" height="14"><use href="#cons"/></svg></div><div class="tc"></div>
        <div class="ti"><svg width="14" height="14"><use href="#newf"/></svg></div><div class="tc"></div>
        <div class="ti"><svg width="11" height="11"><use href="#mini"/></svg></div>
        <div class="ti"><svg width="11" height="11"><use href="#maxi"/></svg></div>
      </div>
    </div>
    <div class="bot-sub">CDT Build Console [petrinets]</div>
    <div class="bot-text d-flex justify-content-end"><div class="vbar"><div class="up"><svg width="9" height="6"><path d="M1 5l3.500-3.500L8 5" fill="none" stroke="#bbb" stroke-width="1.300"/></svg></div></div></div>
    <div class="bot-hbar"><svg width="6" height="9"><path d="M5 1L1.500 4.500 5 8" fill="none" stroke="#aaa" stroke-width="1.100"/></svg><svg width="6" height="9"><path d="M1 1l3.500 3.500L1 8" fill="none" stroke="#aaa" stroke-width="1.100"/></svg></div>
  </div>
</div>

<div class="ide-status d-flex">
  <div class="d-flex flex-grow-1 align-items-start"><svg class="ms-1 me-1" width="11" height="13"><use href="#srcdoc"/></svg>config/#text</div>
  <div class="st-cell st-a">Writable</div>
  <div class="st-cell st-b">Smart Insert</div>
  <div class="st-cell st-c">25 : 32 : 740</div>
  <div class="st-d"></div>
</div>
<div class="wm">omnet-manual.com</div>
</body>
</html>
